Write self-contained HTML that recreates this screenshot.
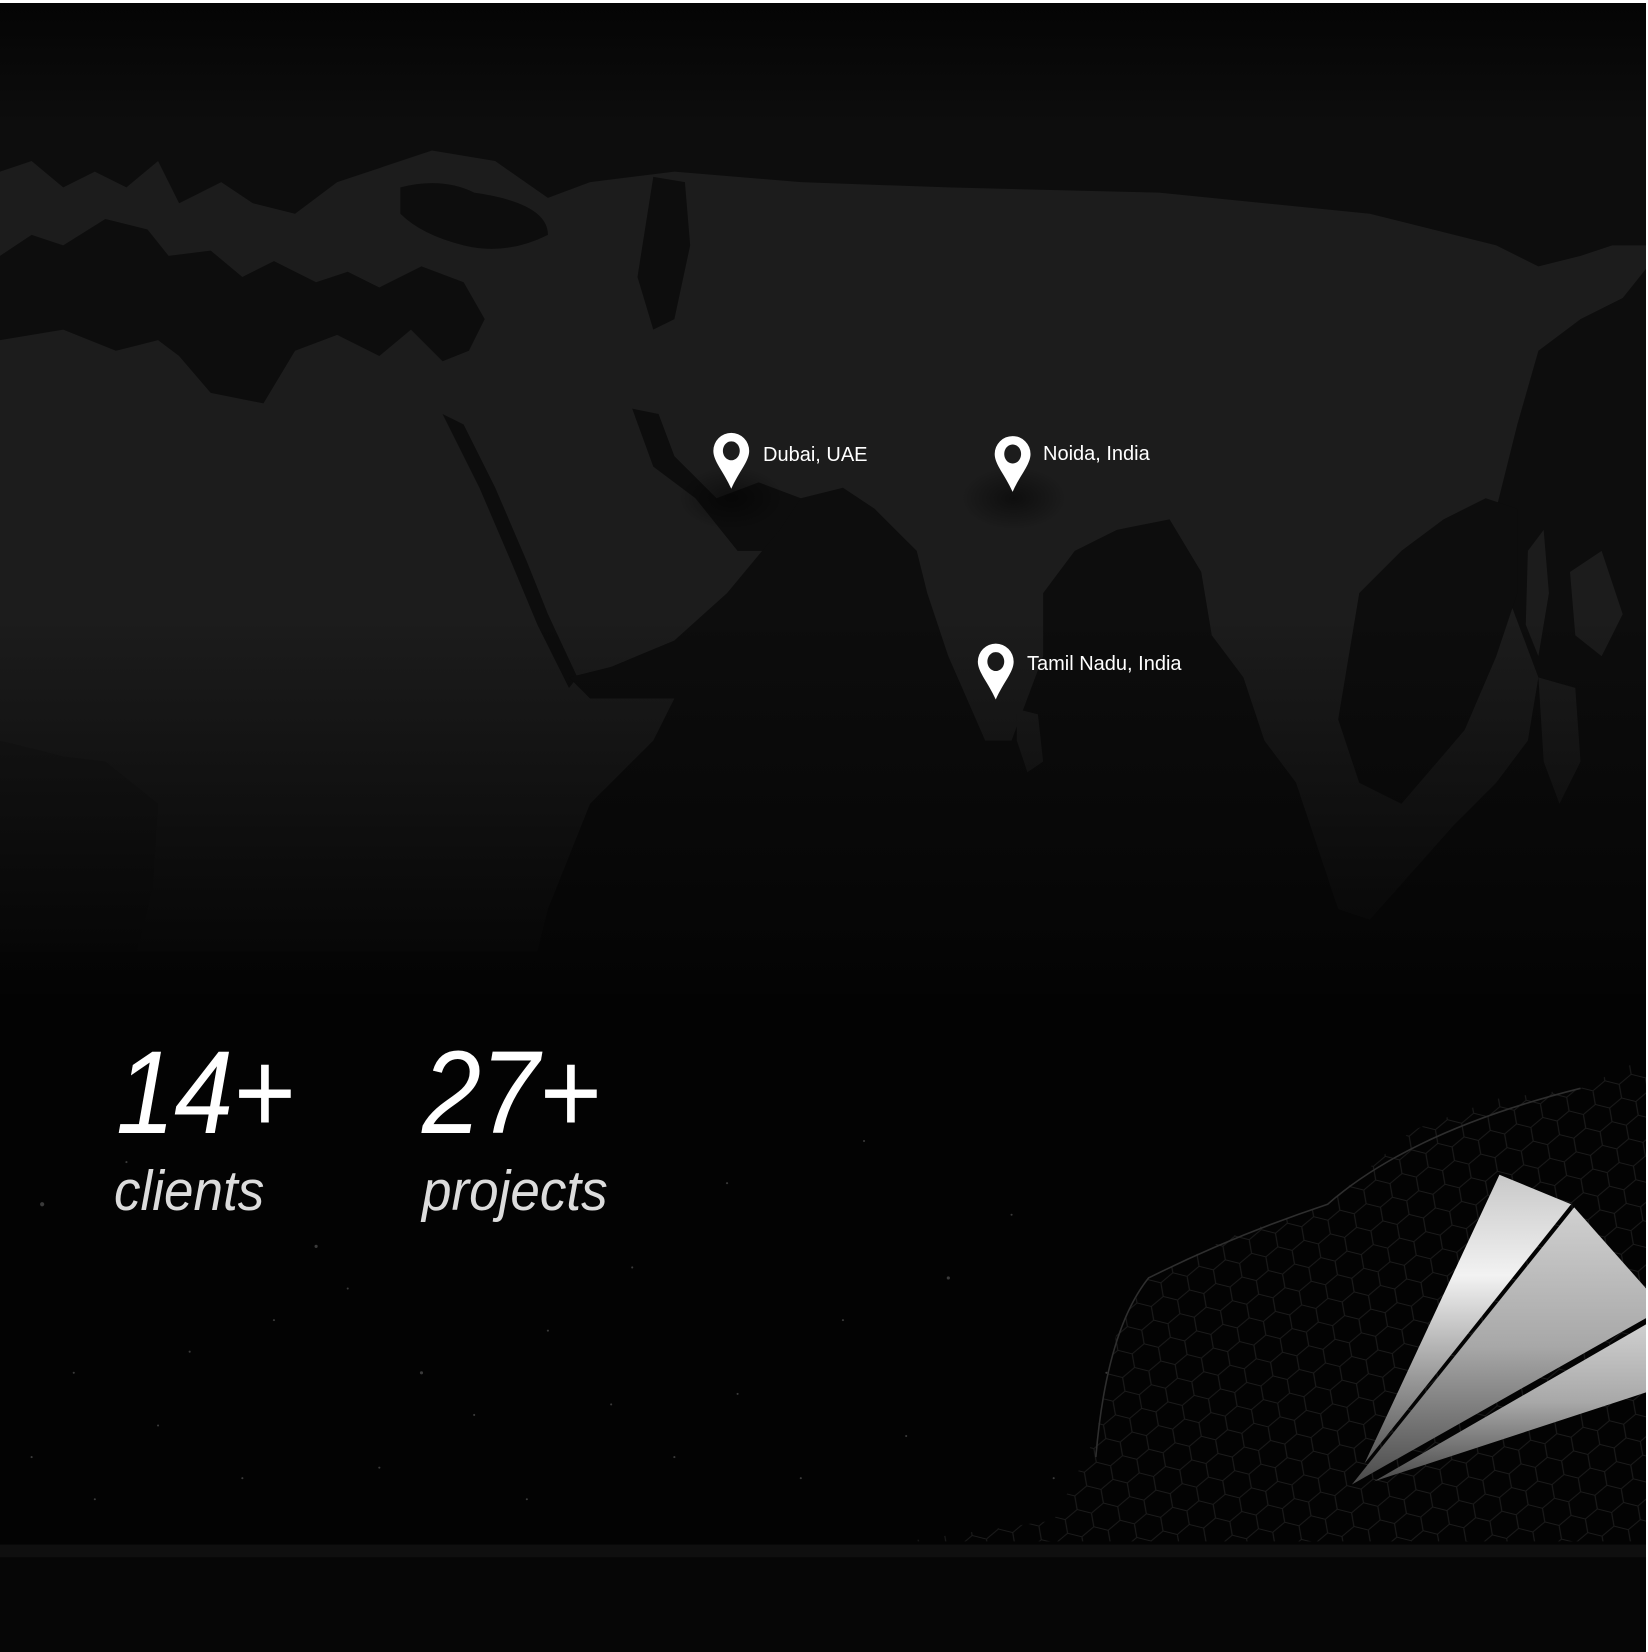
<!DOCTYPE html>
<html><head><meta charset="utf-8"><style>
html,body{margin:0;padding:0;background:#fff;}
body{width:1648px;height:1652px;overflow:hidden;position:relative;font-family:"Liberation Sans",sans-serif;}
#bg{position:absolute;left:0;top:3px;width:1646px;height:1649px;background:#030303;overflow:hidden;}
svg{position:absolute;left:0;top:0;}
.num{position:absolute;color:#fff;font-style:italic;font-size:118px;line-height:1;transform:scaleX(0.9);transform-origin:left top;white-space:nowrap;letter-spacing:-1px;}
.lbl{position:absolute;color:#dcdcdc;font-style:italic;font-size:57px;line-height:1;transform:scaleX(0.93);transform-origin:left top;white-space:nowrap;}
.pt{position:absolute;color:#fff;font-size:20px;line-height:1;white-space:nowrap;}
</style></head><body>
<div id="bg">
<svg width="1646" height="1649" viewBox="0 0 1646 1649">
<defs>
<linearGradient id="fade" x1="0" y1="0" x2="0" y2="1">
<stop offset="0" stop-color="#040404" stop-opacity="1"/>
<stop offset="0.12" stop-color="#040404" stop-opacity="0"/>
<stop offset="0.62" stop-color="#040404" stop-opacity="0"/>
<stop offset="1" stop-color="#040404" stop-opacity="1"/>
</linearGradient>
<pattern id="hex" width="42" height="24" patternUnits="userSpaceOnUse" patternTransform="rotate(14) skewX(-8)">
<path d="M0 12 L7 0 L21 0 L28 12 L21 24 L7 24 Z M28 12 L42 12" fill="none" stroke="#262626" stroke-width="1"/>
</pattern>
<linearGradient id="pg" x1="0" y1="0" x2="0" y2="1">
<stop offset="0" stop-color="#c8c8c8"/><stop offset="0.35" stop-color="#f2f2f2"/><stop offset="0.7" stop-color="#9a9a9a"/><stop offset="1" stop-color="#555"/>
</linearGradient>
<linearGradient id="pg2" x1="0" y1="0" x2="0" y2="1">
<stop offset="0" stop-color="#d0d0d0"/><stop offset="0.5" stop-color="#a8a8a8"/><stop offset="1" stop-color="#4a4a4a"/>
</linearGradient>
<radialGradient id="sh"><stop offset="0" stop-color="#000" stop-opacity=".5"/><stop offset="1" stop-color="#000" stop-opacity="0"/></radialGradient>
</defs>
<g transform="scale(1.0537)">
<rect x="0" y="0" width="1564" height="940" fill="#0d0d0d"/>
<path fill="#1c1c1c" d="M0 160 L30 150 L60 175 L90 160 L120 175 L150 150 L170 190 L210 170 L240 190 L280 200 L320 170 L380 150 L410 140 L470 150 L520 185 L560 170 L640 160 L760 170 L900 175 L1100 180 L1300 200 L1420 230 L1460 250 L1500 240 L1530 230 L1564 230 L1564 900 L0 900 Z"/>
<g fill="#0d0d0d">
<path d="M0 240 L30 220 L60 230 L100 205 L140 215 L160 240 L200 235 L230 260 L260 245 L300 265 L330 255 L360 270 L400 250 L440 265 L460 300 L445 330 L420 340 L390 310 L360 335 L320 315 L280 330 L250 380 L200 370 L170 335 L150 320 L110 330 L60 310 L0 320 Z"/>
<path d="M380 175 Q420 165 450 180 Q520 190 520 220 Q480 240 440 230 Q400 220 380 200 Z"/>
<path d="M620 165 L650 170 L655 230 L640 300 L620 310 L605 260 Z"/>
<path d="M420 390 L440 400 L470 460 L500 530 L520 580 L548 640 L540 650 L510 590 L485 530 L455 460 Z"/>
<path d="M600 385 L625 390 L640 430 L680 470 L720 455 L760 470 L740 520 L700 520 L660 470 L620 440 Z"/>
<path d="M540 640 L580 630 L640 605 L690 560 L740 500 L760 470 L800 460 L830 480 L860 510 L870 520 L880 560 L900 620 L935 700 L960 700 L990 620 L990 560 L1020 520 L1060 500 L1110 490 L1140 540 L1150 600 L1180 640 L1200 700 L1230 740 L1250 800 L1270 860 L1300 870 L1380 780 L1420 740 L1450 700 L1460 640 L1430 560 L1420 480 L1440 400 L1460 330 L1500 300 L1540 280 L1564 250 L1564 940 L500 940 L520 860 L560 760 L620 700 L640 660 L560 660 Z"/>
<path d="M1290 560 L1330 520 L1370 490 L1410 470 L1440 480 L1440 560 L1420 620 L1390 690 L1330 760 L1290 740 L1270 680 Z" />
<path d="M0 700 L60 715 L100 720 L150 760 L145 840 L130 900 L0 900 Z" fill="#181818"/>
</g>
<g fill="#1c1c1c">
<path d="M965 670 L985 675 L990 720 L975 730 L965 700 Z"/>
<path d="M1450 520 L1465 500 L1470 560 L1460 620 L1448 590 Z"/>
<path d="M1460 640 L1495 650 L1500 720 L1480 760 L1465 720 Z"/>
<path d="M1490 540 L1520 520 L1540 580 L1520 620 L1495 600 Z"/>
</g>
<rect x="0" y="0" width="1564" height="940" fill="url(#fade)"/>
<ellipse cx="694" cy="470" rx="50" ry="30" fill="url(#sh)"/>
<ellipse cx="962" cy="470" rx="50" ry="30" fill="url(#sh)"/>
<g fill="#3a3a3a">
<circle cx="40" cy="1140" r="2"/><circle cx="120" cy="1100" r="1"/><circle cx="300" cy="1180" r="1.5"/><circle cx="330" cy="1220" r="1"/><circle cx="260" cy="1250" r="1"/><circle cx="70" cy="1300" r="1"/><circle cx="180" cy="1280" r="1"/><circle cx="400" cy="1300" r="1.5"/><circle cx="520" cy="1260" r="1"/><circle cx="600" cy="1200" r="1"/><circle cx="700" cy="1320" r="1"/><circle cx="800" cy="1250" r="1"/><circle cx="900" cy="1210" r="1.5"/><circle cx="960" cy="1150" r="1"/><circle cx="1050" cy="1300" r="1"/><circle cx="30" cy="1380" r="1"/><circle cx="90" cy="1420" r="1"/><circle cx="230" cy="1400" r="1"/><circle cx="360" cy="1390" r="1"/><circle cx="500" cy="1420" r="1"/><circle cx="640" cy="1380" r="1"/><circle cx="760" cy="1400" r="1"/><circle cx="860" cy="1360" r="1"/><circle cx="1000" cy="1400" r="1"/><circle cx="150" cy="1350" r="1"/><circle cx="450" cy="1340" r="1"/><circle cx="580" cy="1330" r="1"/><circle cx="690" cy="1120" r="1"/><circle cx="820" cy="1080" r="1"/>
</g>
<path d="M860 1460 L1000 1440 L1040 1360 L1060 1260 L1090 1210 L1170 1170 L1260 1140 L1340 1070 L1420 1040 L1500 1030 L1564 1000 L1564 1460 Z" fill="url(#hex)" opacity="0.7"/>
<path d="M1040 1380 Q1050 1260 1090 1210 Q1170 1170 1260 1140 Q1340 1070 1500 1030" fill="none" stroke="#2e2e2e" stroke-width="1.5"/>
<polygon points="1423,1112 1491,1140 1295,1386" fill="url(#pg)"/>
<polygon points="1494,1143 1564,1222 1564,1247 1283,1406" fill="url(#pg2)"/>
<polygon points="1564,1253 1564,1318 1304,1403" fill="url(#pg2)"/>
<rect x="0" y="1463" width="1564" height="110" fill="#060606"/>
<rect x="0" y="1463" width="1564" height="12" fill="#0f0f0f"/>
<g fill="#fff">
<path d="M694 408 a17 17 0 0 1 17 17 c0 10 -10 20 -17 36 c-7 -16 -17 -26 -17 -36 a17 17 0 0 1 17 -17 Z M694 416 a8 9 0 1 0 0.1 0 Z" fill-rule="evenodd"/>
<path d="M961 411 a17 17 0 0 1 17 17 c0 10 -10 20 -17 36 c-7 -16 -17 -26 -17 -36 a17 17 0 0 1 17 -17 Z M961 419 a8 9 0 1 0 0.1 0 Z" fill-rule="evenodd"/>
<path d="M945 608 a17 17 0 0 1 17 17 c0 10 -10 20 -17 36 c-7 -16 -17 -26 -17 -36 a17 17 0 0 1 17 -17 Z M945 616 a8 9 0 1 0 0.1 0 Z" fill-rule="evenodd"/>
</g>
</g>
</svg>
<div class="pt" style="left:763px;top:442px;">Dubai, UAE</div>
<div class="pt" style="left:1043px;top:441px;">Noida, India</div>
<div class="pt" style="left:1027px;top:651px;">Tamil Nadu, India</div>
<div class="num" style="left:116px;top:1031px;">14+</div>
<div class="num" style="left:422px;top:1031px;">27+</div>
<div class="lbl" style="left:114px;top:1160px;">clients</div>
<div class="lbl" style="left:422px;top:1160px;">projects</div>
</div>
</body></html>
